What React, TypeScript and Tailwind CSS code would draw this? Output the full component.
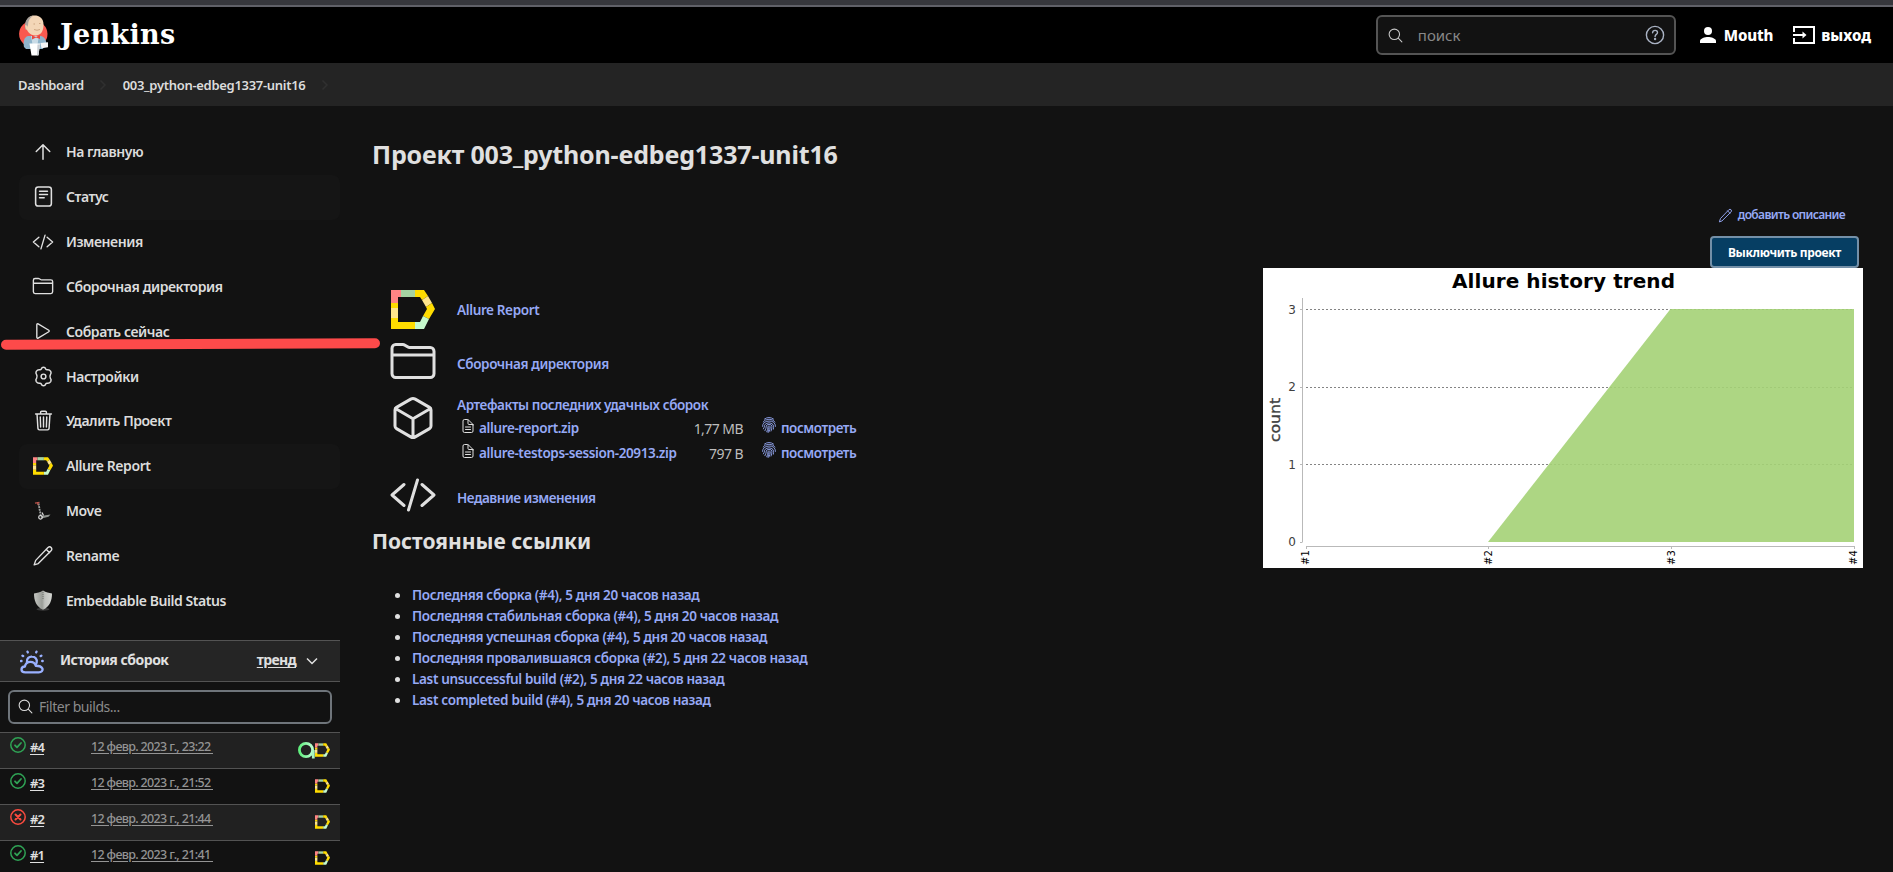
import React from "react";

type P = { className?: string };

const Svg = ({ className, w = 32, children }: P & { w?: number; children: React.ReactNode }) => (
  <svg viewBox="0 0 512 512" className={className} fill="none" stroke="currentColor" strokeWidth={w} strokeLinecap="round" strokeLinejoin="round">{children}</svg>
);

const ArrowUp = ({ className }: P) => <Svg className={className}><path d="M112 244l144-144 144 144M256 120v292" /></Svg>;
const Doc = ({ className }: P) => <Svg className={className} w={38}><rect x="64" y="24" width="384" height="464" rx="64" /><path d="M160 128h192M160 208h192M160 288h112" /></Svg>;
const Code = ({ className }: P) => <Svg className={className}><path d="M160 368L32 256l128-112M352 368l128-112-128-112M304 96l-96 320" /></Svg>;
const Folder = ({ className }: P) => <Svg className={className}><path d="M440 432H72a40 40 0 01-40-40V120a40 40 0 0140-40h75.890a40 40 0 0122.190 6.720l27.840 18.560a40 40 0 0022.190 6.720H440a40 40 0 0140 40v240a40 40 0 01-40 40zM32 192h448" /></Svg>;
const Play = ({ className }: P) => <Svg className={className}><path d="M112 111v290c0 17.440 17 28.520 31 20.160l247.900-148.370c12.120-7.250 12.120-26.330 0-33.580L143 90.840c-14-8.360-31 2.720-31 20.160z" /></Svg>;
const Gear = ({ className }: P) => (
  <Svg className={className} w={36}>
    <circle cx="256" cy="256" r="58" />
    <path d="M205 70Q213 28 256 28T307 70Q322 96 352 92Q398 84 432 132Q456 178 424 212Q400 256 424 300Q456 334 432 380Q398 428 352 420Q322 416 307 442Q299 484 256 484T205 442Q190 416 160 420Q114 428 80 380Q56 334 88 300Q112 256 88 212Q56 178 80 132Q114 84 160 92Q190 96 205 70Z" />
  </Svg>
);
const Trash = ({ className }: P) => <Svg className={className}><path d="M112 112l20 320c.95 18.490 14.400 32 32 32h184c17.670 0 30.870-13.510 32-32l20-320M80 112h352M192 112V72a23.930 23.930 0 0124-24h80a23.930 23.930 0 0124 24v40M256 176v224M184 176l8 224M328 176l-8 224" /></Svg>;
const Pencil = ({ className }: P) => <Svg className={className}><path d="M50 462l36-104L372 58q42-34 78 6 28 42-12 78L146 432zM330 100l78 78" /></Svg>;
const Cube = ({ className }: P) => <Svg className={className}><path d="M448 341.370V170.610A32 32 0 00432.110 143l-152-88.460a47.940 47.940 0 00-48.240 0L79.890 143A32 32 0 0064 170.610v170.760A32 32 0 0079.890 369l152 88.460a48 48 0 0048.240 0l152-88.460A32 32 0 00448 341.370zM69 153.990l187 110 187-110M256 463.990v-200" /></Svg>;
const FileIcon = ({ className }: P) => <Svg className={className}><path d="M416 221.250V416a48 48 0 01-48 48H144a48 48 0 01-48-48V96a48 48 0 0148-48h98.750a32 32 0 0122.620 9.370l141.260 141.260a32 32 0 019.370 22.620zM256 56v120a32 32 0 0032 32h120M176 288h160M176 368h160" /></Svg>;
const Search = ({ className }: P) => <Svg className={className}><path d="M221 64a157 157 0 10157 157A157 157 0 00221 64zM338 338l110 110" /></Svg>;
const Weather = ({ className }: P) => (
  <Svg className={className} w={50}>
    <path d="M112 476c-46 0-80-22-80-60 0-38 34-62 72-64 12-62 60-100 118-100 60 0 102 38 114 84 62 0 120 18 142 60 14 46-22 80-76 80z" />
    <path d="M148 258c-10-78 50-120 108-116 66 0 114 54 100 120-4 18-8 26-14 36" />
    <path d="M160 36l6 16M352 36l-6 16M52 122l16 8M456 122l-16 8M22 234h10M474 234h10" />
  </Svg>
);
const Fingerprint = ({ className }: P) => (
  <Svg className={className} w={28}>
    <path d="M110 66Q256-40 402 66M66 160Q110 76 256 72T446 160M48 300Q56 138 256 130T464 300M78 380Q116 320 112 270 130 190 256 186T404 290Q406 340 396 390M126 438Q174 350 168 286 176 240 256 238T350 290Q350 390 322 450M184 474Q232 380 222 312 226 288 256 288T296 310Q298 410 250 488M256 340Q256 400 220 484" />
  </Svg>
);

const Allure = ({ className }: P) => (
  <svg viewBox="0 0 44 39" className={className}>
    <path d="M0 0h10v7H7v6H0z" fill="#ff8585" />
    <path d="M10 0h14v7H10z" fill="#a5d3a2" />
    <path d="M24 0h9l4 6-6 4-2-3h-5z" fill="#ffdc00" />
    <path d="M37 6l4 7-6 4-4-7z" fill="#ffe58b" />
    <path d="M41 13l3 6-6 10-6-3 4-7-1-2z" fill="#ffdc00" />
    <path d="M38 29l-5 10h-9v-7h5l3-6z" fill="#c5f9cc" />
    <path d="M0 13h7v5H0z" fill="#ffdc00" />
    <path d="M0 18h7v10H0z" fill="#ffe58b" />
    <path d="M0 28h7v4h17v7H0z" fill="#ffdc00" />
  </svg>
);

const Scooter = ({ className }: P) => (
  <svg viewBox="0 0 20 20" className={className} fill="none">
    <path d="M5.500 2.500L8 16" stroke="#9b9e9c" strokeWidth="1.800" strokeDasharray="2 .7" />
    <path d="M2 2.200l4.500-.9M4.500 1l.5 3" stroke="#b8534a" strokeWidth="1.200" />
    <path d="M8 15l9.500-1.500-2 2.300-7 1.700z" fill="#8f938f" />
    <circle cx="7.500" cy="16.300" r="1.800" stroke="#e0e0e0" strokeWidth="1.200" />
    <path d="M9 11.500l1.500 3" stroke="#ddd" strokeWidth="1.200" />
  </svg>
);

const Shield = ({ className }: P) => (
  <svg viewBox="0 0 20 21" className={className}>
    <defs>
      <linearGradient id="sh" x1="0" x2="1"><stop offset="0" stopColor="#c4c6c1" /><stop offset=".45" stopColor="#9a9d98" /><stop offset=".6" stopColor="#c0c2be" /><stop offset="1" stopColor="#d4d6d2" /></linearGradient>
    </defs>
    <ellipse cx="10" cy="19.300" rx="6.500" ry="1.500" fill="#3a3a3a" />
    <path d="M10 .5c3 2 6 2.500 9 3 0 7-2 13-9 16.300C3 16.500 1 10.500 1 3.500c3-.5 6-1 9-3z" fill="url(#sh)" />
    <path d="M10 2v7" stroke="#6f726d" strokeDasharray="1 1" />
  </svg>
);

const Butler = ({ className }: P) => (
  <svg viewBox="0 0 30 41" className={className}>
    <ellipse cx="14.300" cy="19" rx="14.200" ry="13.500" fill="#f9594f" />
    <path d="M5 32c-1-5 0-10 4-11h13c4 1 5.500 5 5.500 9l-4 4H7z" fill="#8fb4cb" />
    <path d="M12 21h8l-2 11h-4z" fill="#c9dbe6" />
    <path d="M7 10C7 3 10.500 .5 15.500 .5S24.500 3 24.500 10c0 7-3.500 10.500-8 10.500C11 20.500 7 16 7 10z" fill="#f3d6b7" />
    <path d="M6 12C5.500 5 9.500 1.500 14 .8 11 3 9 5.500 9 10l-1.500 5C6.500 15 6 14 6 12z" fill="#a9a29e" />
    <path d="M6 10.500c2-1 3 1 3 4H7z" fill="#f3d2b0" />
    <path d="M14.500 9h1.500M20 8.500h1.500M15 14.500q3 1.500 6 0" stroke="#c79f7a" strokeWidth=".9" fill="none" />
    <path d="M13 20.500l4 1.500L21 20v4l-4-1.500-4 2z" fill="#e84a40" />
    <path d="M10.500 28.500H21L19.500 40.500h-7z" fill="#fff" />
    <path d="M18.500 29.500h2.500L19.500 40l-1.500.2z" fill="#c9cdd2" />
    <path d="M21.500 28l7.500-.8v5l-6.500 1z" fill="#f4f4f4" />
  </svg>
);

const TestOps = ({ className }: P) => (
  <svg viewBox="0 0 17 17" className={className} fill="none">
    <defs><linearGradient id="ao" x1="0" x2="1"><stop offset="0" stopColor="#5fef7d" /><stop offset="1" stopColor="#b9ffd0" /></linearGradient></defs>
    <circle cx="8" cy="8" r="6.600" stroke="url(#ao)" strokeWidth="2.800" />
    <path d="M15.300 8v8.500" stroke="#a8f5c0" strokeWidth="2.800" />
  </svg>
);

const Status = ({ ok }: { ok: boolean }) => (
  <svg viewBox="0 0 16 16" className={ok ? "size-4 text-[#2fa355]" : "size-4 text-[#fb4b3f]"} fill="none" stroke="currentColor" strokeLinecap="round" strokeLinejoin="round">
    <circle cx="8" cy="8" r="7.200" strokeWidth="1.500" />
    {ok ? <path d="M5 8.300l2 2 4-4.300" strokeWidth="1.800" /> : <path d="M5.500 5.500l5 5M10.500 5.500l-5 5" strokeWidth="2" />}
  </svg>
);

const tasks = [
  { label: "На главную", icon: <ArrowUp className="size-6" /> },
  { label: "Статус", icon: <Doc className="size-[21px]" /> },
  { label: "Изменения", icon: <Code className="size-[22px]" /> },
  { label: "Сборочная директория", icon: <Folder className="size-[22px]" /> },
  { label: "Собрать сейчас", icon: <Play className="size-[22px]" /> },
  { label: "Настройки", icon: <Gear className="size-[21px]" /> },
  { label: "Удалить Проект", icon: <Trash className="size-[23px]" /> },
  { label: "Allure Report", icon: <Allure className="h-[18px] w-5" /> },
  { label: "Move", icon: <Scooter className="size-5" /> },
  { label: "Rename", icon: <Pencil className="size-[22px]" /> },
  { label: "Embeddable Build Status", icon: <Shield className="h-[21px] w-5" /> },
];

const builds = [
  { n: "#4", date: "12 февр. 2023 г., 23:22", ok: true, ops: true },
  { n: "#3", date: "12 февр. 2023 г., 21:52", ok: true, ops: false },
  { n: "#2", date: "12 февр. 2023 г., 21:44", ok: false, ops: false },
  { n: "#1", date: "12 февр. 2023 г., 21:41", ok: true, ops: false },
];

const links = [
  "Последняя сборка (#4), 5 дня 20 часов назад",
  "Последняя стабильная сборка (#4), 5 дня 20 часов назад",
  "Последняя успешная сборка (#4), 5 дня 20 часов назад",
  "Последняя провалившаяся сборка (#2), 5 дня 22 часов назад",
  "Last unsuccessful build (#2), 5 дня 22 часов назад",
  "Last completed build (#4), 5 дня 20 часов назад",
];

const Header = () => (
  <header className="flex h-14 shrink-0 items-center bg-black pr-[22px] pl-[19px] text-white">
    <Butler className="h-[41px] w-[30px]" />
    <span className="mt-[-2px] ml-[11px] font-['DejaVu_Serif',serif] text-[27px] leading-none font-bold tracking-[0.3px]">Jenkins</span>
    <div className="ml-auto flex h-10 w-[300px] items-center rounded-md border-2 border-[#545454] bg-[#121212] pr-[9px] pl-[9px]">
      <Search className="size-[17px] text-[#c8c8c8]" />
      <span className="ml-[14px] text-[15px] text-[#888]">поиск</span>
      <svg viewBox="0 0 20 20" className="ml-auto size-5 text-[#aab3c4]" fill="none" stroke="currentColor" strokeWidth="1.400" strokeLinecap="round">
        <circle cx="10" cy="10" r="8.600" />
        <path d="M7.600 7.800c.2-3.200 4.900-3.100 4.900-.3 0 1.900-2.400 1.900-2.400 4" />
        <circle cx="10.100" cy="14" r=".5" fill="currentColor" />
      </svg>
    </div>
    <svg viewBox="0 0 16 16" className="ml-[24px] size-4" fill="currentColor"><circle cx="8" cy="4" r="4" /><path d="M0 16v-2c0-2.500 5-4 8-4s8 1.500 8 4v2z" /></svg>
    <span className="ml-2 text-[15px] font-extrabold tracking-[-0.15px]">Mouth</span>
    <svg viewBox="0 0 22 18" className="ml-[20px] h-[18px] w-[22px]" fill="none" stroke="currentColor" strokeWidth="2"><path d="M1 6V1h20v16H1v-5M0 9h12" /><path d="M9.500 5.500L13.500 9l-4 3.500z" fill="currentColor" stroke="none" /></svg>
    <span className="ml-[6px] text-[15px] font-extrabold">выход</span>
  </header>
);

const Chev = ({ className }: P) => <svg viewBox="0 0 8 12" className={className} fill="none" stroke="currentColor" strokeWidth="1.500"><path d="M1.500 1.500L6 6l-4.500 4.500" /></svg>;

const Sidebar = () => (
  <aside className="relative w-[340px] shrink-0 pt-[24px]">
    <nav className="flex flex-col pl-[19px]">
      {tasks.map((t) => (
        <a key={t.label} className={t.label === "Статус" || t.label === "Allure Report" ? "flex h-[44.85px] items-center rounded-lg bg-[#151515] pl-3" : "flex h-[44.85px] items-center pl-3"}>
          <span className="mt-[-1px] flex size-6 items-center justify-center text-[#e0e0e0]">{t.icon}</span>
          <span className="mt-[-1px] ml-[11px] text-[14px] font-semibold tracking-[-0.44px] text-[#dcdcdc]">{t.label}</span>
        </a>
      ))}
    </nav>
    <div className="absolute top-[233px] left-[1px] h-[10px] w-[379px] rotate-[-0.25deg] rounded-full bg-[#fd4a4a]" />
    <section className="mt-[16.65px]">
      <div className="flex h-[42px] items-center border-y border-[#535353] bg-[#252525] pr-[22px] pl-5">
        <Weather className="mt-[2px] size-6 text-[#9ab1ff]" />
        <span className="mt-[-2px] ml-4 text-[14px] font-bold tracking-[-0.5px] text-[#e0e0e0]">История сборок</span>
        <span className="mt-[-2px] ml-auto text-[14px] font-bold tracking-[-0.6px] text-[#e0e0e0] underline underline-offset-2">тренд</span>
        <svg viewBox="0 0 12 8" className="ml-[10px] h-2 w-3" fill="none" stroke="#e0e0e0" strokeWidth="1.500"><path d="M1 1.500l5 5 5-5" /></svg>
      </div>
      <div className="h-[50px] px-2 pt-2">
        <div className="flex h-[34px] items-center rounded-md border-2 border-[#6f757b] bg-[#121212] pl-[7px]">
          <Search className="size-[17px] text-[#dcdcdc]" />
          <span className="ml-[5px] text-[14px] tracking-[-0.45px] text-[#8b8b8b]">Filter builds...</span>
        </div>
      </div>
      {builds.map((b, i) => (
        <div key={b.n} className={i % 2 ? "flex h-9 items-start border-t border-[#535353] pt-1 pr-[10px] pl-[10px]" : "flex h-9 items-start border-t border-[#535353] bg-[#212121] pt-1 pr-[10px] pl-[10px]"}>
          <Status ok={b.ok} />
          <a className="ml-1 w-[61px] text-[13px] leading-[20px] font-semibold tracking-[-0.9px] text-[#e0e0e0] underline underline-offset-2">{b.n}</a>
          <a className="text-[12.5px] leading-[20px] font-medium tracking-[-0.66px] whitespace-pre text-[#949494] underline underline-offset-2">{b.date + " "}</a>
          <span className="mt-[5px] ml-auto flex items-center">
            {b.ops && <TestOps className="size-[17px]" />}
            <Allure className={b.ops ? "h-[14px] w-[15px]" : "mt-px h-[14px] w-[15px]"} />
          </span>
        </div>
      ))}
    </section>
  </aside>
);

const Artifact = ({ name, size }: { name: string; size: string }) => (
  <div className="flex h-[25px] items-center pl-[3px] whitespace-nowrap">
    <FileIcon className="mt-[-5px] size-[16px] text-[#e0e0e0]" />
    <a className="mt-[-1px] ml-[3px] w-[200px] tracking-[-0.37px]">{name}</a>
    <span className="mt-[-1px] w-[64px] text-right text-[14px] font-normal tracking-[-0.55px] text-[#bdbdbd]">{size}</span>
    <Fingerprint className="mt-[-7px] ml-[18px] size-4" />
    <a className="mt-[-1px] ml-[4px] tracking-[-0.45px]">посмотреть</a>
  </div>
);

const Chart = () => (
  <svg viewBox="0 0 600 300" className="h-[300px] w-[600px] shrink-0 bg-white">
    <text x="300.500" y="20" textAnchor="middle" className="font-['DejaVu_Sans'] text-[20px] font-bold" textLength="223" fill="#000">Allure history trend</text>
    <g stroke="#848484" strokeDasharray="2 2"><path d="M43 41.500H591M43 119.500H591M43 196.500H591" /></g>
    <path d="M225 274L407.500 41H591V274Z" fill="#a4d175" fillOpacity=".9" />
    <g stroke="#b9b9b9" fill="none"><path d="M39.500 30V274.500M37 41.500h2M37 119.500h2M37 196.500h2M37 274.500h2M43 278.500H592M43.500 278v3M225.500 278v3M408.500 278v3M591.500 278v3" /></g>
    <g className="font-['DejaVu_Sans'] text-[12px]" fill="#404040" textAnchor="end"><text x="33" y="46">3</text><text x="33" y="123">2</text><text x="33" y="201">1</text><text x="33" y="278">0</text></g>
    <text transform="translate(17 152) rotate(-90)" textAnchor="middle" className="font-['DejaVu_Sans'] text-[14px]" textLength="44" lengthAdjust="spacingAndGlyphs" fill="#404040" stroke="#404040" strokeWidth=".35">count</text>
    <g className="font-['DejaVu_Sans'] text-[10px]" fill="#000">
      <text transform="translate(46 297) rotate(-90)">#1</text><text transform="translate(229 297) rotate(-90)">#2</text><text transform="translate(412 297) rotate(-90)">#3</text><text transform="translate(594 297) rotate(-90)">#4</text>
    </g>
  </svg>
);

export default function App() {
  return (
    <div className="flex h-[872px] w-[1893px] flex-col overflow-hidden bg-[#121212] font-['Noto_Sans','Open_Sans',sans-serif] text-[#e0e0e0]">
      <div className="h-[7px] shrink-0 border-b-2 border-[#606168] bg-[#36373c]" />
      <Header />
      <div className="flex h-[43px] shrink-0 items-center bg-[#242424] pl-[18px] text-[13px] font-semibold text-[#dcdcdc]">
        <span className="mt-[2px] tracking-[-0.38px]">Dashboard</span>
        <Chev className="ml-[15px] h-3 w-2 text-[#303030]" />
        <span className="mt-[2px] ml-[16px] tracking-[-0.3px]">003_python-edbeg1337-unit16</span>
        <Chev className="ml-[16px] h-3 w-2 text-[#303030]" />
      </div>
      <div className="flex min-h-0 flex-1">
        <Sidebar />
        <main className="flex flex-1 justify-between pr-[30px] pl-8">
          <div className="pt-[29px]">
            <h1 className="text-[25px] leading-[38px] font-bold tracking-[-0.16px] whitespace-nowrap">Проект 003_python-edbeg1337-unit16</h1>
            <div className="mt-[109px] grid grid-cols-[85px_1fr] text-[13.5px] font-semibold text-[#96a9f5]">
              <div className="flex h-[52px] items-center pl-[19px]"><Allure className="mt-[2px] h-[39px] w-[44px]" /></div>
              <a className="pt-[18px] leading-5 tracking-[-0.36px]">Allure Report</a>
              <div className="flex h-[54px] items-center pl-[17px] text-[#e0e0e0]"><Folder className="size-12" /></div>
              <a className="pt-[20px] leading-5 tracking-[-0.38px]">Сборочная директория</a>
              <div className="h-[84px] pt-[6px] pl-[17px] text-[#e0e0e0]"><Cube className="size-12" /></div>
              <div className="pt-[7px]">
                <a className="block h-[21px] leading-5 tracking-[-0.42px]">Артефакты последних удачных сборок</a>
                <Artifact name="allure-report.zip" size="1,77 MB" />
                <Artifact name="allure-testops-session-20913.zip" size="797 B" />
              </div>
              <div className="h-[48px] pl-[17px] text-[#e0e0e0]"><Code className="mt-[-1px] size-12" /></div>
              <a className="pt-[16px] leading-5 tracking-[-0.46px]">Недавние изменения</a>
            </div>
            <h2 className="mt-[5px] text-[21px] leading-8 font-bold">Постоянные ссылки</h2>
            <ul className="mt-[28px] text-[13.5px] leading-[21px] font-semibold tracking-[-0.34px] text-[#96a9f5]">
              {links.map((l) => (
                <li key={l} className="flex items-center"><span className="mt-[-1px] mr-[12px] ml-[23px] size-[5px] rounded-full bg-[#e0e0e0]" />{l}</li>
              ))}
            </ul>
          </div>
          <div className="flex flex-col items-end pt-[97px]">
            <a className="mr-[18px] flex h-[24px] items-center text-[12px] font-semibold tracking-[-0.65px] text-[#96a9f5]"><Pencil className="mr-[5px] size-[15px]" />добавить описание</a>
            <button className="mt-[9px] mr-[4px] flex h-[32px] w-[149px] shrink-0 items-center justify-center rounded-[4px] border-2 border-[#7490a8] bg-[#063e63] pt-px text-[12px] font-bold tracking-[-0.34px] text-white">Выключить проект</button>
            <Chart />
          </div>
        </main>
      </div>
    </div>
  );
}
